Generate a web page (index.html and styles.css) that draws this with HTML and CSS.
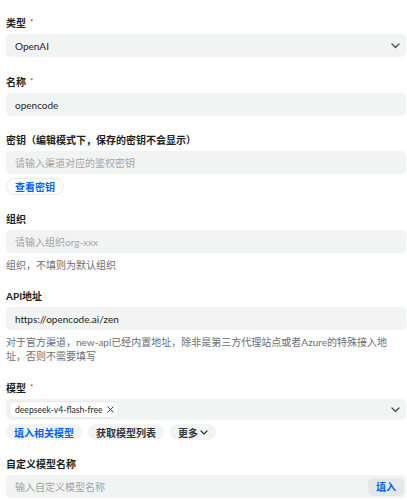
FILE: index.html
```html
<!DOCTYPE html>
<html lang="zh-CN">
<head>
  <meta charset="UTF-8" />
  <meta name="viewport" content="width=device-width, initial-scale=1.0"/>
  <title>编辑渠道</title>
  <link rel="stylesheet" href="styles.css">
</head>
<body>

  <form class="channel-form">
    <!-- 类型 -->
    <div class="field">
      <label class="field-label">类型<span class="req">*</span></label>
      <div class="input input-select">
        <span class="value">OpenAI</span>
        <svg class="chevron" width="9" height="6" viewBox="0 0 9 6"><path d="M1 1l3.5 3.5L8 1" /></svg>
      </div>
    </div>

    <!-- 名称 -->
    <div class="field">
      <label class="field-label">名称<span class="req">*</span></label>
      <div class="input"><span class="value">opencode</span></div>
    </div>

    <!-- 密钥 -->
    <div class="field">
      <label class="field-label">密钥（编辑模式下，保存的密钥不会显示）</label>
      <div class="input"><span class="placeholder">请输入渠道对应的鉴权密钥</span></div>
      <div class="actions">
        <button type="button" class="btn btn-outline">查看密钥</button>
      </div>
    </div>

    <!-- 组织 -->
    <div class="field">
      <label class="field-label">组织</label>
      <div class="input"><span class="placeholder">请输入组织org-xxx</span></div>
      <div class="help">组织，不填则为默认组织</div>
    </div>

    <!-- API地址 -->
    <div class="field">
      <label class="field-label">API地址</label>
      <div class="input"><span class="value">https://opencode.ai/zen</span></div>
      <div class="help">对于官方渠道，new-api已经内置地址，除非是第三方代理站点或者Azure的特殊接入地址，否则不需要填写</div>
    </div>

    <!-- 模型 -->
    <div class="field">
      <label class="field-label">模型<span class="req">*</span></label>
      <div class="input input-multi">
        <span class="tag">
          deepseek-v4-flash-free
          <svg class="tag-close" width="7" height="7" viewBox="0 0 8 8"><path d="M1 1l6 6M7 1L1 7" /></svg>
        </span>
        <svg class="chevron" width="9" height="6" viewBox="0 0 9 6"><path d="M1 1l3.5 3.5L8 1" /></svg>
      </div>
      <div class="actions actions-row">
        <button type="button" class="btn btn-fill btn-primary">填入相关模型</button>
        <button type="button" class="btn btn-fill">获取模型列表</button>
        <button type="button" class="btn btn-fill">更多<svg class="more-chevron" width="8" height="5" viewBox="0 0 8 5"><path d="M1 1l3 3 3-3" /></svg></button>
      </div>
    </div>

    <!-- 自定义模型名称 -->
    <div class="field">
      <label class="field-label">自定义模型名称</label>
      <div class="input input-suffix">
        <span class="placeholder">输入自定义模型名称</span>
        <button type="button" class="btn-inner">填入</button>
      </div>
    </div>
  </form>

</body>
</html>
```

FILE: styles.css
```css
:root {
  --text: #1c1f23;
  --text-sub: #6b6e72;
  --placeholder: #a2a4a7;
  --fill: #f2f3f3;
  --fill-strong: #e5e7e8;
  --primary: #0064fa;
  --danger: #f93920;
  --border: #e6e8ea;
}

body {
  margin: 0;
  background: #fff;
  color: var(--text);
  font-family: Lato, "Noto Sans CJK SC", sans-serif;
  font-size: 10px;
}

.channel-form {
  width: 400px;
  padding: 15px 0 0 6px;
}

.field {
  margin-bottom: 17px;
}

.field-label {
  display: block;
  font-weight: 700;
  line-height: 14px;
  margin-bottom: 4px;
}

.req {
  color: var(--danger);
  font-size: 8px;
  margin-left: 4px;
  vertical-align: 2px;
}

.input {
  display: flex;
  align-items: center;
  height: 23px;
  padding: 0 9px;
  background: var(--fill);
  border-radius: 5px;
  box-sizing: border-box;
}

.input-select {
  padding-right: 6px;
}

.value {
  flex: 1;
}

.placeholder {
  flex: 1;
  color: var(--placeholder);
}

.chevron {
  margin-left: auto;
  fill: none;
  stroke: #4a4d52;
  stroke-width: 1.3;
  stroke-linecap: round;
  stroke-linejoin: round;
}

/* 多选：标签 + 下拉箭头 */
.input-multi {
  height: 21px;
  padding: 0 6px 0 3px;
}

.tag {
  display: inline-flex;
  align-items: center;
  gap: 4px;
  height: 17px;
  padding: 0 4px 0 5px;
  background: #fff;
  border: 1px solid var(--border);
  border-radius: 6px;
  box-sizing: border-box;
  font-size: 8.6px;
}

.tag-close {
  fill: none;
  stroke: #333;
  stroke-width: 1.1;
  stroke-linecap: round;
}

.input-suffix {
  padding-right: 2px;
}

.btn-inner {
  height: 18px;
  padding: 0 8px;
  border: none;
  border-radius: 5px;
  background: var(--fill-strong);
  color: var(--primary);
  font: inherit;
  font-weight: 700;
}

.help {
  margin-top: 5px;
  line-height: 14px;
  color: var(--text-sub);
}

.actions {
  margin-top: 4px;
  display: flex;
}

.actions-row {
  gap: 6px;
}

.btn {
  display: inline-flex;
  align-items: center;
  height: 17px;
  padding: 0 8px;
  border-radius: 9px;
  font: inherit;
  font-weight: 700;
  cursor: pointer;
}

.btn-outline {
  background: #fff;
  border: 1px solid var(--border);
  color: var(--primary);
}

.btn-fill {
  height: 16px;
  padding: 0 8px;
  background: var(--fill);
  border: none;
  color: #33363a;
}

.btn-primary {
  color: var(--primary);
}

.more-chevron {
  margin-left: 2px;
  fill: none;
  stroke: #33363a;
  stroke-width: 1.2;
  stroke-linecap: round;
  stroke-linejoin: round;
}
```
